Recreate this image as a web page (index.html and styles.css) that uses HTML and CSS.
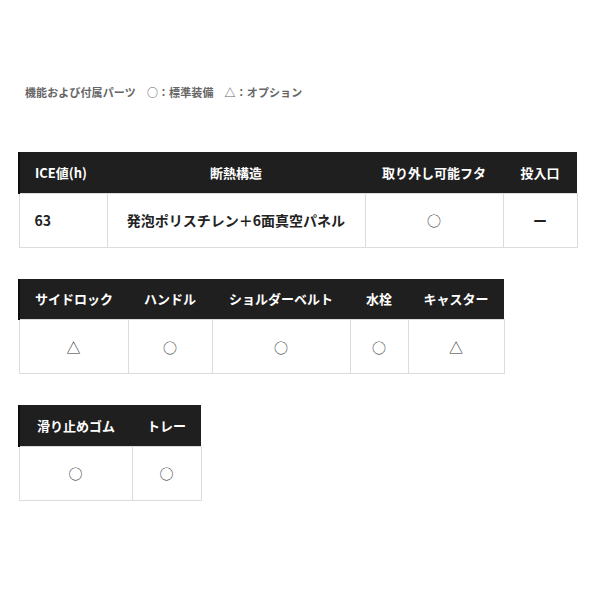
FILE: index.html
```
<!DOCTYPE html>
<html lang="ja">
<head>
<meta charset="utf-8">
<title>機能および付属パーツ</title>
<link rel="stylesheet" href="styles.css">
</head>
<body>
<div class="spec">
  <p class="spec-caption">機能および付属パーツ　○：標準装備　△：オプション</p>

  <table class="spec-table t1">
    <colgroup>
      <col style="width:88px"><col style="width:258px"><col style="width:138px"><col style="width:74px">
    </colgroup>
    <tr>
      <th class="left">ICE値(h)</th>
      <th>断熱構造</th>
      <th>取り外し可能フタ</th>
      <th>投入口</th>
    </tr>
    <tr>
      <td class="left strong">63</td>
      <td class="strong">発泡ポリスチレン＋6面真空パネル</td>
      <td>○</td>
      <td class="strong">ー</td>
    </tr>
  </table>

  <table class="spec-table t2">
    <colgroup>
      <col style="width:109px"><col style="width:84px"><col style="width:138px"><col style="width:58px"><col style="width:96px">
    </colgroup>
    <tr>
      <th>サイドロック</th>
      <th>ハンドル</th>
      <th>ショルダーベルト</th>
      <th>水栓</th>
      <th>キャスター</th>
    </tr>
    <tr>
      <td>△</td>
      <td>○</td>
      <td>○</td>
      <td>○</td>
      <td>△</td>
    </tr>
  </table>

  <table class="spec-table t3">
    <colgroup>
      <col style="width:113px"><col style="width:69px">
    </colgroup>
    <tr>
      <th>滑り止めゴム</th>
      <th>トレー</th>
    </tr>
    <tr>
      <td>○</td>
      <td>○</td>
    </tr>
  </table>
</div>
</body>
</html>
```

FILE: styles.css
```
* {
  box-sizing: border-box;
  margin: 0;
  padding: 0;
}

body {
  background-color: #fff;
  font-family: "Noto Sans CJK JP", "Noto Sans", sans-serif;
  color: #222;
}

.spec {
  padding: 84px 19px 0 18px;
}

.spec-caption {
  padding-left: 7px;
  font-size: 11px;
  line-height: 16px;
  font-weight: 700;
  color: #666;
  letter-spacing: 0.1px;
}

.spec-table {
  border-collapse: collapse;
  table-layout: fixed;
  margin-top: 31px;
}

.spec-table.t1 {
  margin-top: 52px;
}

.spec-table th {
  height: 41px;
  background-color: #1f1f1f;
  color: #fff;
  font-size: 13px;
  font-weight: 700;
  text-align: center;
  white-space: nowrap;
  padding: 0 8px;
}

.spec-table th:first-child {
  border-left: 2px solid #0d0d0d;
}

.spec-table td {
  height: 54px;
  border: 1px solid #dcdcdc;
  background-color: #fff;
  font-size: 14px;
  font-weight: 400;
  color: #333;
  text-align: center;
  white-space: nowrap;
  padding: 0 8px;
}

.spec-table .left {
  text-align: left;
  padding-left: 15px;
}

.spec-table td.strong {
  font-weight: 700;
  color: #222;
}
```
